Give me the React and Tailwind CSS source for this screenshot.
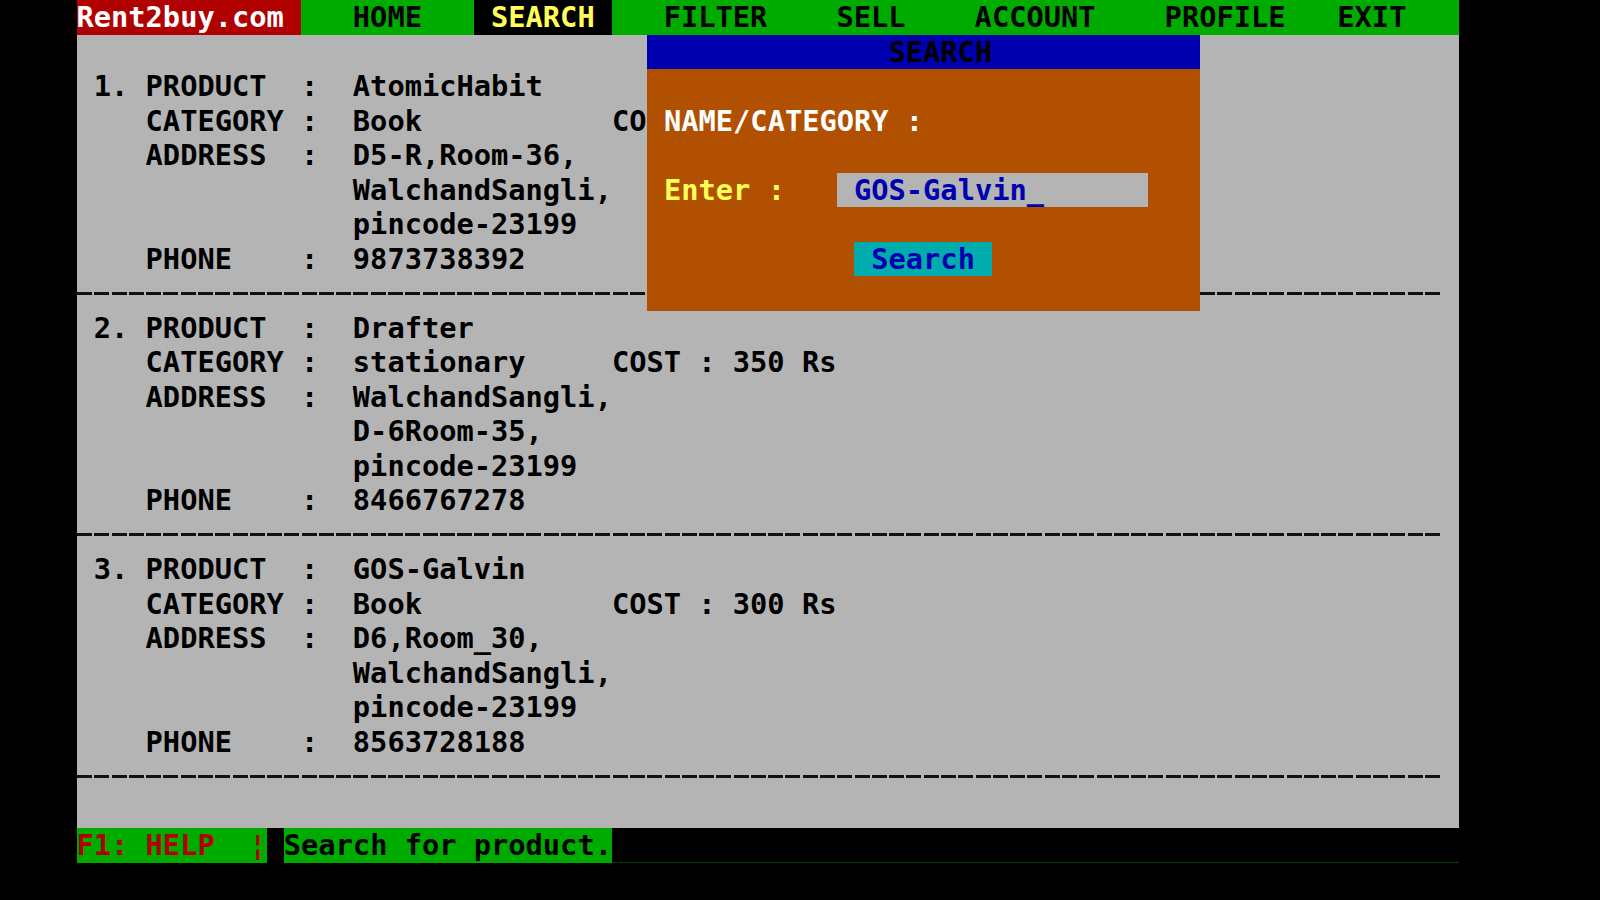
import React from 'react';

// text-mode grid: 80 cols x 25 rows
const ROW = 'h-[34.5px] leading-[34.5px] whitespace-pre';

function field(num, key, val, cost) {
  let s = (num ? ` ${num}. ` : '    ') + key.padEnd(9) + ':  ' + val;
  if (cost) s = s.padEnd(31) + cost;
  return s;
}
const cont = (val) => ' '.repeat(16) + val;

// row 3 is cut off by the popup window, only "CO" shows
const listing = [
  '',
  field(1, 'PRODUCT', 'AtomicHabit'),
  field(0, 'CATEGORY', 'Book', 'CO'),
  field(0, 'ADDRESS', 'D5-R,Room-36,'),
  cont('WalchandSangli,'),
  cont('pincode-23199'),
  field(0, 'PHONE', '9873738392'),
  '---',
  field(2, 'PRODUCT', 'Drafter'),
  field(0, 'CATEGORY', 'stationary', 'COST : 350 Rs'),
  field(0, 'ADDRESS', 'WalchandSangli,'),
  cont('D-6Room-35,'),
  cont('pincode-23199'),
  field(0, 'PHONE', '8466767278'),
  '---',
  field(3, 'PRODUCT', 'GOS-Galvin'),
  field(0, 'CATEGORY', 'Book', 'COST : 300 Rs'),
  field(0, 'ADDRESS', 'D6,Room_30,'),
  cont('WalchandSangli,'),
  cont('pincode-23199'),
  field(0, 'PHONE', '8563728188'),
  '---',
  '',
];

function Dashes() {
  return (
    <div className={`${ROW} flex items-center`}>
      <div className="h-[3px] w-[1365.12px] bg-[repeating-linear-gradient(90deg,#111_0px,#111_15px,transparent_15px,transparent_17.28px)]" />
    </div>
  );
}

function MenuBar() {
  return (
    <div className={`${ROW} flex bg-[#00ab00] text-black`}>
      <span className="bg-[#b00000] text-white">Rent2buy.com </span>
      <span>   HOME   </span>
      <span className="bg-black text-[#ffff55]"> SEARCH </span>
      <span>   FILTER    SELL    ACCOUNT    PROFILE   EXIT   </span>
    </div>
  );
}

function SearchPopup() {
  return (
    <div className="absolute left-[570.24px] top-[34.5px] w-[552.96px]">
      <div className={`${ROW} bg-[#0000b0] text-black`}>{'              SEARCH'}</div>
      <div className="bg-[#b05000]">
        <div className={ROW}> </div>
        <div className={`${ROW} text-white`}>{' NAME/CATEGORY :'}</div>
        <div className={ROW}> </div>
        <div className={`${ROW} flex`}>
          <span className="text-[#ffff55]">{' Enter :   '}</span>
          <span className="bg-[#b4b4b4] text-[#0000b0]">{' GOS-Galvin_'.padEnd(18)}</span>
        </div>
        <div className={ROW}> </div>
        <div className={`${ROW} flex`}>
          <span>{' '.repeat(12)}</span>
          <span className="bg-[#00acac] text-[#0000b0]">{' Search '}</span>
        </div>
        <div className={ROW}> </div>
      </div>
    </div>
  );
}

function StatusBar() {
  return (
    <div className={`${ROW} flex bg-black`}>
      <span className="bg-[#00ab00] text-[#b00000]">{'F1: HELP  ¦'}</span>
      <span> </span>
      <span className="bg-[#00ab00] text-black">Search for product.</span>
      <span className="flex-1 border-b border-[#0c3a0c]" />
    </div>
  );
}

export default function App() {
  return (
    <div className="w-[1600px] h-[900px] bg-black overflow-hidden">
      <div className="relative ml-[76.5px] w-[1382.4px] font-['DejaVu_Sans_Mono',monospace] font-bold text-[28.7px]">
        <MenuBar />
        <div className="bg-[#b4b4b4] text-black">
          {listing.map((line, i) =>
            line === '---' ? (
              <Dashes key={i} />
            ) : (
              <div key={i} className={ROW}>{line || ' '}</div>
            )
          )}
        </div>
        <StatusBar />
        <SearchPopup />
      </div>
    </div>
  );
}
